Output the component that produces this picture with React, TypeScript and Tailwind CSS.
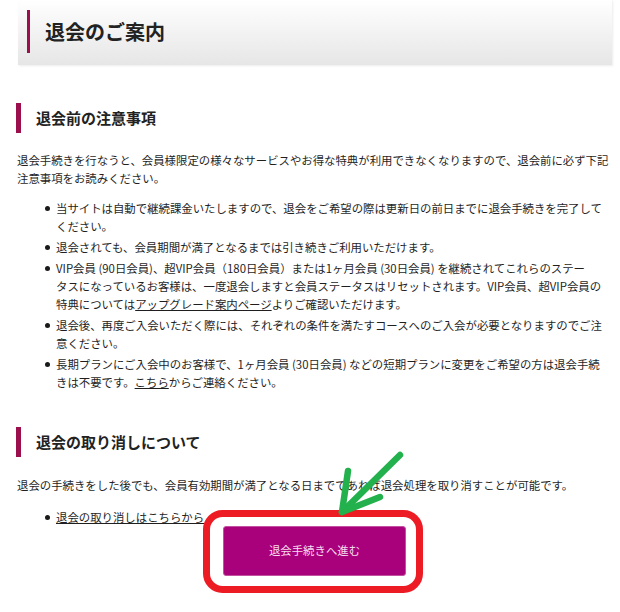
import React from "react";

const Item = ({ children, className = "" }: { children: React.ReactNode; className?: string }) => (
  <li className={"flex " + className}>
    <span className="w-[39px] shrink-0 flex justify-end pr-[6px] pt-[7px]">
      <span className="block w-[5px] h-[5px] rounded-full bg-[#1a1a1a]" />
    </span>
    <span className="whitespace-nowrap">{children}</span>
  </li>
);

const H2 = ({ children, className = "" }: { children: React.ReactNode; className?: string }) => (
  <div className={"flex items-center ml-[16px] " + className}>
    <span className="block w-[5px] h-[30px] bg-[#9c0f4d]" />
    <h2 className="ml-[15px] text-[15px] font-bold text-[#222] leading-[30px]">{children}</h2>
  </div>
);

export default function App() {
  return (
    <div
      className="relative w-[620px] h-[612px] bg-white overflow-hidden text-[#1f1f1f]"
      style={{ fontFamily: '"Noto Sans CJK JP", "Noto Sans", sans-serif' }}
    >
      <div className="ml-[18px] w-[594px] h-[65px] bg-gradient-to-b from-white to-[#e6e6e6] shadow-[1px_1px_2px_rgba(0,0,0,0.08)] pt-[10px] pl-[9px] flex items-start">
        <span className="block w-[3px] h-[43px] bg-[#9c0f4d]" />
        <h1 className="ml-[15px] text-[20px] font-bold leading-[43px] text-[#222]">退会のご案内</h1>
      </div>

      <H2 className="mt-[38px]">退会前の注意事項</H2>

      <p className="ml-[17px] mt-[18px] text-[11.4px] leading-[18px] whitespace-nowrap">
        退会手続きを行なうと、会員様限定の様々なサービスやお得な特典が利用できなくなりますので、退会前に必ず下記
        <br />
        注意事項をお読みください。
      </p>

      <ul className="ml-[17px] mt-[12px] text-[11.4px] leading-[18px] flex flex-col gap-[3px]">
        <Item>
          当サイトは自動で継続課金いたしますので、退会をご希望の際は更新日の前日までに退会手続きを完了して
          <br />
          ください。
        </Item>
        <Item>退会されても、会員期間が満了となるまでは引き続きご利用いただけます。</Item>
        <Item>
          VIP会員 (90日会員)、超VIP会員（180日会員）または1ヶ月会員 (30日会員) を継続されてこれらのステー
          <br />
          タスになっているお客様は、一度退会しますと会員ステータスはリセットされます。VIP会員、超VIP会員の
          <br />
          特典については<a className="underline">アップグレード案内ページ</a>よりご確認いただけます。
        </Item>
        <Item>
          退会後、再度ご入会いただく際には、それぞれの条件を満たすコースへのご入会が必要となりますのでご注
          <br />
          意ください。
        </Item>
        <Item>
          長期プランにご入会中のお客様で、1ヶ月会員 (30日会員) などの短期プランに変更をご希望の方は退会手続
          <br />
          きは不要です。<a className="underline">こちら</a>からご連絡ください。
        </Item>
      </ul>

      <H2 className="mt-[36px]">退会の取り消しについて</H2>

      <p className="ml-[17px] mt-[19px] text-[11.4px] leading-[18px] whitespace-nowrap">
        退会の手続きをした後でも、会員有効期間が満了となる日までであれば退会処理を取り消すことが可能です。
      </p>

      <ul className="ml-[17px] mt-[14px] text-[11.4px] leading-[18px]">
        <Item>
          <a className="underline">退会の取り消しはこちらから</a>
        </Item>
      </ul>

      <div className="ml-[17px] w-[595px] flex justify-center">
        <button className="w-[183px] h-[50px] rounded-[3px] bg-[#a9007b] border border-[#c2529f] text-[#f7dcef] text-[11.4px]">
          退会手続きへ進む
        </button>
      </div>

      <svg className="absolute left-0 top-0 pointer-events-none" width="620" height="612" viewBox="0 0 620 612">
        <rect x="206.5" y="513.5" width="213" height="76" rx="16" ry="16" fill="none" stroke="#ed1c24" strokeWidth="7" />
        <g stroke="#22b14c" strokeWidth="6.5" strokeLinecap="round" strokeLinejoin="round" fill="none">
          <path d="M400 455 L342 512" />
          <path d="M348 471 L342 512 L380 497" />
        </g>
      </svg>
    </div>
  );
}
